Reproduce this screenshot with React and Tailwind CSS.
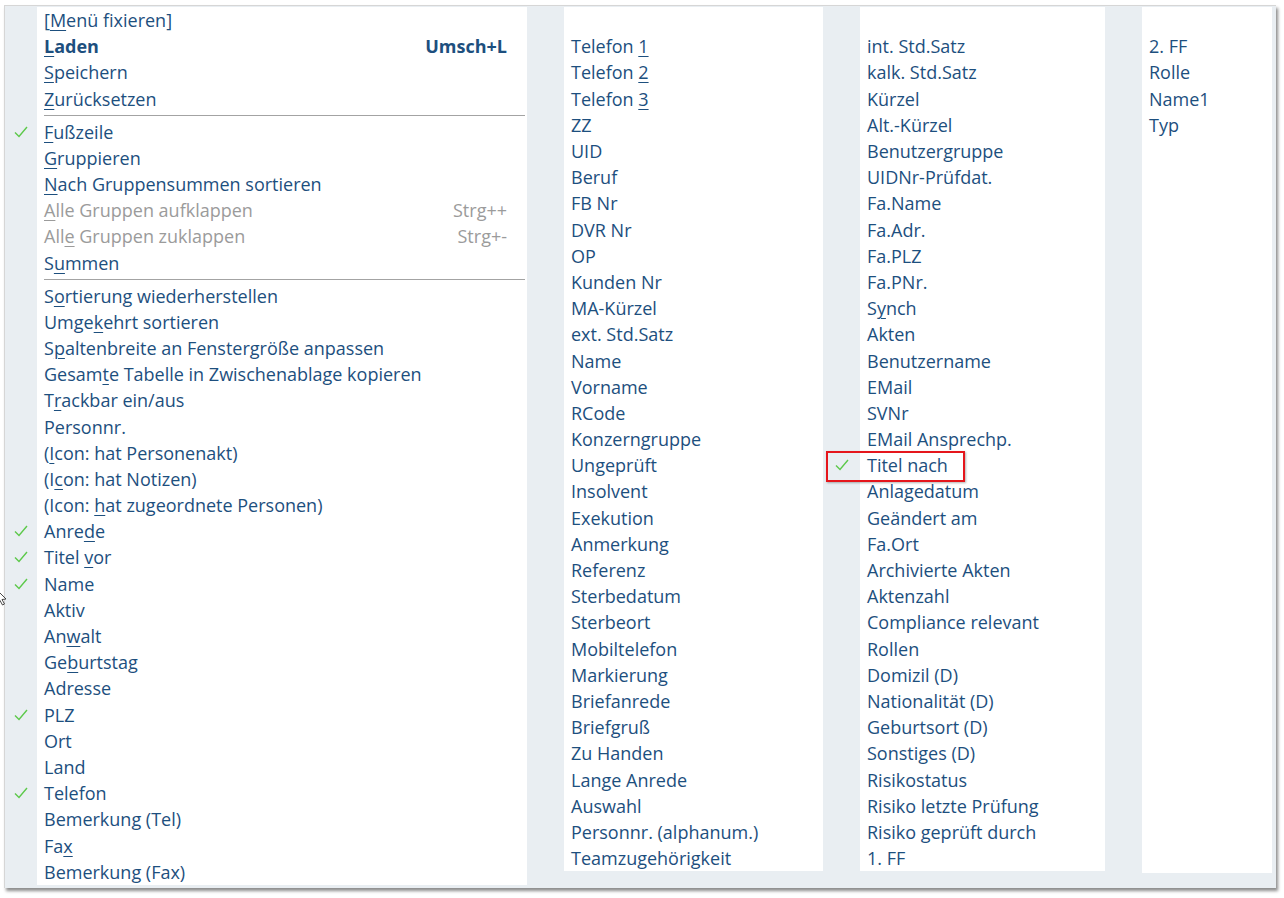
import React from 'react';

// '&' marks the mnemonic letter that gets underlined
const col1Top = [
  { t: '[&Menü fixieren]' },
  { t: '&Laden', key: 'Umsch+L', bold: true },
  { t: '&Speichern' },
  { t: '&Zurücksetzen' },
];

const col1Mid = [
  { t: '&Fußzeile', on: true },
  { t: '&Gruppieren' },
  { t: '&Nach Gruppensummen sortieren' },
  { t: '&Alle Gruppen aufklappen', key: 'Strg++', off: true },
  { t: 'All&e Gruppen zuklappen', key: 'Strg+-', off: true },
  { t: 'S&ummen' },
];

const col1Bottom = [
  { t: 'S&ortierung wiederherstellen' },
  { t: 'Umge&kehrt sortieren' },
  { t: 'S&paltenbreite an Fenstergröße anpassen' },
  { t: 'Gesam&te Tabelle in Zwischenablage kopieren' },
  { t: 'T&rackbar ein/aus' },
  { t: 'Personnr.' },
  { t: '(&Icon: hat Personenakt)' },
  { t: '(I&con: hat Notizen)' },
  { t: '(Icon: &hat zugeordnete Personen)' },
  { t: 'Anre&de', on: true },
  { t: 'Titel &vor', on: true },
  { t: 'Name', on: true },
  { t: 'Aktiv' },
  { t: 'An&walt' },
  { t: 'Ge&burtstag' },
  { t: 'Adresse' },
  { t: 'PLZ', on: true },
  { t: 'Ort' },
  { t: 'Land' },
  { t: 'Telefon', on: true },
  { t: 'Bemerkung (Tel)' },
  { t: 'Fa&x' },
  { t: 'Bemerkung (Fax)' },
];

const col2 = [
  'Telefon &1', 'Telefon &2', 'Telefon &3', 'ZZ', 'UID', 'Beruf', 'FB Nr', 'DVR Nr', 'OP',
  'Kunden Nr', 'MA-Kürzel', 'ext. Std.Satz', 'Name', 'Vorname', 'RCode', 'Konzerngruppe',
  'Ungeprüft', 'Insolvent', 'Exekution', 'Anmerkung', 'Referenz', 'Sterbedatum', 'Sterbeort',
  'Mobiltelefon', 'Markierung', 'Briefanrede', 'Briefgruß', 'Zu Handen', 'Lange Anrede',
  'Auswahl', 'Personnr. (alphanum.)', 'Teamzugehörigkeit',
];

const col3 = [
  'int. Std.Satz', 'kalk. Std.Satz', 'Kürzel', 'Alt.-Kürzel', 'Benutzergruppe', 'UIDNr-Prüfdat.',
  'Fa.Name', 'Fa.Adr.', 'Fa.PLZ', 'Fa.PNr.', 'S&ynch', 'Akten', 'Benutzername', 'EMail', 'SVNr',
  'EMail Ansprechp.', 'Titel nach', 'Anlagedatum', 'Geändert am', 'Fa.Ort', 'Archivierte Akten',
  'Aktenzahl', 'Compliance relevant', 'Rollen', 'Domizil (D)', 'Nationalität (D)',
  'Geburtsort (D)', 'Sonstiges (D)', 'Risikostatus', 'Risiko letzte Prüfung',
  'Risiko geprüft durch', '1. FF',
];

const col4 = ['2. FF', 'Rolle', 'Name1', 'Typ'];

const Label = ({ text }) => {
  const i = text.indexOf('&');
  if (i < 0) return text;
  return (
    <>
      {text.slice(0, i)}
      <span className="underline underline-offset-[3px] decoration-1">{text[i + 1]}</span>
      {text.slice(i + 2)}
    </>
  );
};

const Check = () => (
  <svg width="16" height="14" viewBox="0 0 16 14" className="shrink-0">
    <path d="M2 7.5 L6 11.5 L14 2" fill="none" stroke="#5cc94a" strokeWidth="1.4" />
  </svg>
);

const Row = ({ item, gutter }) => (
  <div className="relative h-[26.2px] flex items-center pl-[7px] pr-[20px] whitespace-nowrap">
    {item.on && (
      <div className={`absolute top-0 h-full flex items-center justify-center ${gutter}`}>
        <Check />
      </div>
    )}
    <span className={`${item.off ? 'text-[#9b9b9b]' : 'text-[#1d4f7e]'} ${item.bold ? 'font-bold' : ''}`}>
      <Label text={item.t} />
    </span>
    {item.key && (
      <span className={`ml-auto ${item.off ? 'text-[#9b9b9b]' : 'text-[#1d4f7e]'} ${item.bold ? 'font-bold' : ''}`}>
        {item.key}
      </span>
    )}
  </div>
);

const Separator = () => (
  <div className="h-[6.8px] flex items-center pl-[7px] pr-[2px]">
    <div className="h-px w-full bg-[#a3a3a3]" />
  </div>
);

const App = () => {
  return (
    <div className="relative w-[1284px] h-[898px] bg-white overflow-hidden font-['Open_Sans',sans-serif] text-[18px] leading-none">
      <div className="ml-[4px] mt-[5px] w-[1272px] h-[883px] bg-[#e9eef2] border-t border-l border-[#d6d6d6] shadow-[2px_3px_3px_rgba(0,0,0,0.45)] flex items-start pt-px">
        {/* Column 1 */}
        <div className="ml-[32px] w-[490px] bg-white">
          {col1Top.map((it, i) => <Row key={i} item={it} gutter="-left-[32px] w-[32px]" />)}
          <Separator />
          {col1Mid.map((it, i) => <Row key={i} item={it} gutter="-left-[32px] w-[32px]" />)}
          <Separator />
          {col1Bottom.map((it, i) => <Row key={i} item={it} gutter="-left-[32px] w-[32px]" />)}
        </div>

        {/* Column 2 */}
        <div className="ml-[37px] w-[259px] bg-white pt-[26.2px]">
          {col2.map((t, i) => <Row key={i} item={{ t }} gutter="-left-[37px] w-[37px]" />)}
        </div>

        {/* Column 3 */}
        <div className="ml-[37px] w-[245px] bg-white pt-[26.2px]">
          {col3.map((t, i) => (
            <Row key={i} item={{ t, on: t === 'Titel nach' }} gutter="-left-[37px] w-[37px]" />
          ))}
        </div>

        {/* Column 4 */}
        <div className="ml-[37px] w-[130px] h-[865.6px] bg-white pt-[26.2px]">
          {col4.map((t, i) => <Row key={i} item={{ t }} gutter="-left-[37px] w-[37px]" />)}
        </div>
      </div>

      {/* highlight box */}
      <div className="absolute left-[826px] top-[451px] w-[139px] h-[31px] border-[2.5px] border-[#e5161c] shadow-[1px_1px_2px_rgba(0,0,0,0.3)]" />

      {/* mouse pointer fragment */}
      <svg className="absolute left-0 top-[590px]" width="8" height="18" viewBox="0 0 8 18">
        <path d="M-2 1 L6 9 L2 9.5 L4.5 14 L2.5 15 L0 10.5 L-2 13 Z" fill="white" stroke="#333" strokeWidth="0.9" />
      </svg>
    </div>
  );
};

export default App;
